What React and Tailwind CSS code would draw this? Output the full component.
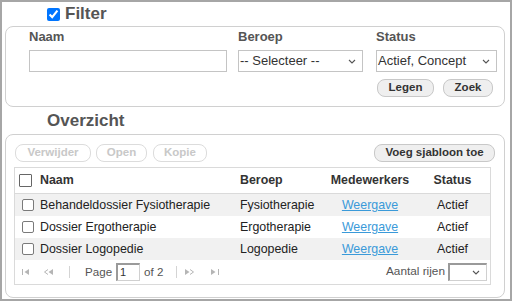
import React from "react";

const rows = [
  { naam: "Behandeldossier Fysiotherapie", beroep: "Fysiotherapie", status: "Actief", shade: true },
  { naam: "Dossier Ergotherapie", beroep: "Ergotherapie", status: "Actief", shade: false },
  { naam: "Dossier Logopedie", beroep: "Logopedie", status: "Actief", shade: true },
];

// small chevron used in the selects
const Chevron = () => (
  <svg width="8" height="5" viewBox="0 0 8 5" className="shrink-0">
    <path d="M1 1 L4 4 L7 1" fill="none" stroke="#555" strokeWidth="1.1" />
  </svg>
);

const PagerIcon = ({ kind }) => {
  const c = "#b5b5b5";
  if (kind === "first")
    return (
      <svg width="8" height="6" viewBox="0 0 8 6">
        <rect x="0" y="0" width="1" height="6" fill={c} />
        <path d="M7 0 L2.5 3 L7 6 Z" fill={c} />
      </svg>
    );
  if (kind === "prev")
    return (
      <svg width="9" height="6" viewBox="0 0 9 6">
        <path d="M4 0.5 L0.5 3 L4 5.5" fill="none" stroke={c} strokeWidth="1" />
        <path d="M9 0 L4.5 3 L9 6 Z" fill={c} />
      </svg>
    );
  if (kind === "next")
    return (
      <svg width="9" height="6" viewBox="0 0 9 6">
        <path d="M0 0 L4.5 3 L0 6 Z" fill={c} />
        <path d="M5 0.5 L8.5 3 L5 5.5" fill="none" stroke={c} strokeWidth="1" />
      </svg>
    );
  return (
    <svg width="8" height="6" viewBox="0 0 8 6">
      <path d="M0 0 L4.5 3 L0 6 Z" fill={c} />
      <rect x="7" y="0" width="1" height="6" fill={c} />
    </svg>
  );
};

const Box = ({ small }) =>
  small ? (
    <div className="w-[12px] h-[12px] border border-[#7a7a7a] rounded-[2px] bg-white shrink-0" />
  ) : (
    <div className="w-[13px] h-[13px] border border-[#666] rounded-[1px] bg-white shrink-0" />
  );

export default function App() {
  return (
    <div className="w-[512px] h-[301px] border-2 border-[#a6a6a6] bg-white font-['Liberation_Sans',Arial,sans-serif] overflow-hidden">
      {/* Filter title */}
      <div className="h-[24px] flex items-center pl-[45px] gap-[5px]">
        <input type="checkbox" defaultChecked className="w-[13px] h-[13px] accent-[#0075ff] m-0" />
        <span className="text-[17px] font-bold text-[#555]">Filter</span>
      </div>

      {/* Filter box */}
      <div className="ml-[3px] w-[500px] h-[81px] border border-[#d0d0d0] rounded-[8px] pt-[2px]">
        <div className="flex">
          <div className="ml-[23px] w-[198px]">
            <div className="text-[13px] leading-[15px] font-bold text-[#555]">Naam</div>
            <div className="mt-[6px] h-[22px] border border-[#c4c4c4] bg-white" />
          </div>
          <div className="ml-[11px] w-[125px]">
            <div className="text-[13px] leading-[15px] font-bold text-[#555]">Beroep</div>
            <div className="mt-[6px] h-[22px] border border-[#c4c4c4] bg-white flex items-center justify-between pl-[1px] pr-[6px]">
              <span className="text-[13px] text-[#333]">-- Selecteer --</span>
              <Chevron />
            </div>
          </div>
          <div className="ml-[13px] w-[121px]">
            <div className="text-[13px] leading-[15px] font-bold text-[#555]">Status</div>
            <div className="mt-[6px] h-[22px] border border-[#c4c4c4] bg-white flex items-center justify-between pl-[1px] pr-[6px]">
              <span className="text-[13px] text-[#333]">Actief, Concept</span>
              <Chevron />
            </div>
            <div className="flex mt-[7px]">
              <button className="ml-[1px] w-[57px] h-[18px] rounded-[8px] border border-[#c8c8c8] bg-[#efefef] text-[11.5px] font-bold text-[#333] leading-none">
                Legen
              </button>
              <button className="ml-[9px] w-[50px] h-[18px] rounded-[8px] border border-[#c8c8c8] bg-[#efefef] text-[11.5px] font-bold text-[#333] leading-none">
                Zoek
              </button>
            </div>
          </div>
        </div>
      </div>

      {/* Overzicht title */}
      <div className="h-[27px] flex items-center pl-[45px]">
        <span className="text-[17px] font-bold text-[#555]">Overzicht</span>
      </div>

      {/* Overview box */}
      <div className="ml-[3px] w-[500px] h-[164px] border border-[#d0d0d0] rounded-[8px] pt-[9px]">
        <div className="flex items-center">
          <button className="ml-[9px] w-[76px] h-[18px] rounded-[8px] border border-[#dcdcdc] bg-white text-[11.5px] font-bold text-[#c8c8c8] leading-none">
            Verwijder
          </button>
          <button className="ml-[5px] w-[51px] h-[18px] rounded-[8px] border border-[#dcdcdc] bg-white text-[11.5px] font-bold text-[#c8c8c8] leading-none">
            Open
          </button>
          <button className="ml-[6px] w-[54px] h-[18px] rounded-[8px] border border-[#dcdcdc] bg-white text-[11.5px] font-bold text-[#c8c8c8] leading-none">
            Kopie
          </button>
          <button className="ml-auto mr-[9px] w-[121px] h-[18px] rounded-[8px] border border-[#c8c8c8] bg-[#efefef] text-[11.5px] font-bold text-[#333] leading-none">
            Voeg sjabloon toe
          </button>
        </div>

        {/* Table */}
        <div className="mt-[5px] ml-[8px] w-[477px] border border-[#dadada] text-[12.4px]">
          <div className="grid grid-cols-[220px_90px_90px_75px] h-[26px] border-b border-[#dadada] items-center font-bold text-[#333]">
            <div className="flex items-center pl-[4px] gap-[8px]">
              <Box />
              <span>Naam</span>
            </div>
            <div className="pl-[5px]">Beroep</div>
            <div className="text-center">Medewerkers</div>
            <div className="text-center">Status</div>
          </div>
          {rows.map((r) => (
            <div
              key={r.naam}
              className={`grid grid-cols-[220px_90px_90px_75px] h-[22px] items-center text-[#222] ${r.shade ? "bg-[#f1f1f1]" : "bg-white"}`}
            >
              <div className="flex items-center pl-[7px] gap-[6px]">
                <Box small />
                <span className="whitespace-nowrap">{r.naam}</span>
              </div>
              <div className="pl-[5px]">{r.beroep}</div>
              <div className="text-center">
                <a href="#" className="text-[#3a9ad9] underline">Weergave</a>
              </div>
              <div className="text-center">{r.status}</div>
            </div>
          ))}
          {/* Pager */}
          <div className="h-[24px] flex items-center text-[11.6px] text-[#555]">
            <div className="ml-[7px]"><PagerIcon kind="first" /></div>
            <div className="ml-[14px]"><PagerIcon kind="prev" /></div>
            <div className="ml-[16px] w-px h-[12px] bg-[#d4d4d4]" />
            <span className="ml-[15px]">Page</span>
            <div className="ml-[4px] w-[24px] h-[18px] border-t-2 border-l-2 border-r border-b border-t-[#9a9a9a] border-l-[#9a9a9a] border-r-[#d0d0d0] border-b-[#d0d0d0] bg-white flex items-center pl-[2px] text-[11px] text-[#333]">
              1
            </div>
            <span className="ml-[4px]">of 2</span>
            <div className="ml-[13px] w-px h-[12px] bg-[#d4d4d4]" />
            <div className="ml-[8px]"><PagerIcon kind="next" /></div>
            <div className="ml-[17px]"><PagerIcon kind="last" /></div>
            <span className="ml-auto text-[11.8px]">Aantal rijen</span>
            <div className="ml-[3px] mr-[3px] w-[39px] h-[18px] border-t-2 border-l-2 border-r border-b border-t-[#9a9a9a] border-l-[#9a9a9a] border-r-[#d0d0d0] border-b-[#d0d0d0] bg-white flex items-center justify-end pr-[6px]">
              <Chevron />
            </div>
          </div>
        </div>
      </div>
    </div>
  );
}
